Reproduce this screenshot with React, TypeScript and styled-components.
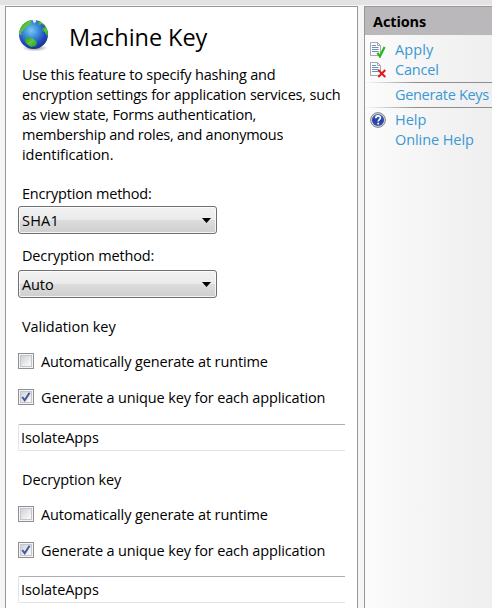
import React from 'react';
import styled, { createGlobalStyle } from 'styled-components';

const GlobalStyle = createGlobalStyle`
  * { box-sizing: border-box; }
  html, body { margin: 0; padding: 0; overflow: hidden; }
  body {
    width: 492px;
    height: 608px;
    background: #f6f6f6;
    color: #000;
    font-family: 'Open Sans', 'Noto Sans', sans-serif;
    font-size: 14.5px;
    line-height: 20px;
    white-space: nowrap;
  }
`;

const Window = styled.div`
  display: flex;
  flex-direction: column;
  width: 492px;
  height: 608px;
  overflow: hidden;
`;

const TopStrip = styled.div`
  flex: 0 0 5px;
  margin-bottom: 1px;
  background: #e5e2e4;
`;

const Panels = styled.div`
  flex: 1;
  display: flex;
  gap: 6px;
  padding-left: 5px;
  min-height: 0;
`;

const Feature = styled.main`
  flex: 0 0 353px;
  display: flex;
  flex-direction: column;
  overflow: hidden;
  padding: 11px 12px 0;
  border: 1px solid #979797;
  border-bottom: 0;
  background: #fff;
`;

const TitleRow = styled.header`
  display: flex;
  align-items: flex-start;
  flex: 0 0 47px;
  gap: 19px;
`;

const Title = styled.h1`
  margin: 3px 0 0;
  font-size: 23.5px;
  line-height: 32px;
  font-weight: 400;
  letter-spacing: -0.05px;
`;

const Text = styled.span<{ $spacing?: number }>`
  display: block;
  letter-spacing: ${(p) => p.$spacing ?? -0.25}px;
`;

const Description = styled.div`
  margin: 0 0 19px 4px;
`;

const Field = styled.div<{ $gap: number }>`
  display: flex;
  flex-direction: column;
  gap: ${(p) => p.$gap}px;
  margin-bottom: 12px;
`;

const Label = styled.div`
  padding-left: 4px;
`;

const Select = styled.div`
  display: flex;
  align-items: center;
  justify-content: space-between;
  width: 199px;
  height: 28px;
  padding: 1px 5px 0 3px;
  border: 1px solid #707070;
  border-radius: 3px;
  background: linear-gradient(#f2f2f2, #ebebeb 49%, #dddddd 50%, #cfcfcf);
  box-shadow: inset 0 0 0 1px rgba(255, 255, 255, 0.75);
`;

const KeySection = styled.section<{ $top: number }>`
  display: flex;
  flex-direction: column;
  margin-top: ${(p) => p.$top}px;
`;

const Checks = styled.div`
  display: flex;
  flex-direction: column;
  gap: 16px;
  margin-top: 14px;
`;

const CheckRow = styled.div`
  display: flex;
  align-items: center;
  gap: 7px;
  height: 20px;
`;

const CheckLabel = styled(Text)`
  padding-top: 2px;
`;

const Box = styled.span`
  display: grid;
  place-items: center;
  width: 16px;
  height: 16px;
  border: 1px solid #8e8f8f;
  background: #f4f4f4;
`;

const BoxInner = styled.span`
  display: grid;
  place-items: center;
  width: 12px;
  height: 12px;
  border: 1px solid #c3c7cd;
  background: linear-gradient(135deg, #cfd2d7, #f6f6f6 85%);
`;

const Input = styled.div<{ $top: number }>`
  height: 27px;
  width: 327px;
  margin-top: ${(p) => p.$top}px;
  padding: 3px 0 0 2px;
  border: 1px solid #e2e3ea;
  border-top-color: #abadb3;
  border-right: 0;
  border-radius: 2px 0 0 2px;
`;

const Actions = styled.aside`
  flex: 1;
  display: flex;
  flex-direction: column;
  min-width: 0;
  border: solid #979797;
  border-width: 1px 0 0 1px;
  background: linear-gradient(90deg, #fcfcfc, #f3f3f3 60%, #efefef);
`;

const ActionsHeader = styled.div`
  flex: 0 0 28px;
  padding: 5px 0 0 8px;
  margin-bottom: 5px;
  background: #bab8ba;
  font-weight: 700;
`;

const Action = styled.div`
  display: flex;
  align-items: center;
  gap: 9px;
  height: 20px;
  padding-left: 5px;
  color: #3b98d4;
`;

const IconSlot = styled.span`
  display: flex;
  flex: 0 0 16px;
  height: 16px;
`;

const Divider = styled.div`
  flex: 0 0 1px;
  margin: 2px 0;
  background: linear-gradient(90deg, #f4f4f4 3%, #8e8e8e 40%, #8e8e8e);
`;

function Globe() {
  return (
    <svg width="32" height="34" viewBox="0 0 32 34">
      <defs>
        <radialGradient id="sea" cx=".42" cy=".36" r=".66">
          <stop offset="0" stopColor="#7cc8f2" />
          <stop offset=".4" stopColor="#3a8cdc" />
          <stop offset=".75" stopColor="#2348b8" />
          <stop offset="1" stopColor="#1b3390" />
        </radialGradient>
        <radialGradient id="ground">
          <stop offset="0" stopColor="#000" stopOpacity=".45" />
          <stop offset="1" stopColor="#000" stopOpacity="0" />
        </radialGradient>
        <linearGradient id="land" x2="1" y2="1">
          <stop offset="0" stopColor="#259c1c" />
          <stop offset=".5" stopColor="#5fc63e" />
          <stop offset="1" stopColor="#159a38" />
        </linearGradient>
        <clipPath id="disc"><circle cx="15.5" cy="16.5" r="14.5" /></clipPath>
      </defs>
      <ellipse cx="17" cy="30" rx="13" ry="3.5" fill="url(#ground)" />
      <circle cx="15.5" cy="16.5" r="14.5" fill="url(#sea)" />
      <g clipPath="url(#disc)" fill="url(#land)">
        <path d="M1 15 3 7 9 2l5-1-1 3 1 1-3 2-2 2-3 2-1 2-2 1 1 2-2 1z" />
        <path d="m20 3 4-1 4 5-2 1-2-2-3 1z" />
        <path d="m25 10 3-2 3 6-1 4-2-1-1-3-3-2z" />
        <path d="m7 21 3-2 4 1 5 4-1 4-5 1-4-3-2-3z" />
        <path d="m14 1 4 0 0 3-2 1z" fill="#e8faff" />
      </g>
    </svg>
  );
}

function DocIcon({ kind }: { kind: 'apply' | 'cancel' }) {
  return (
    <svg width="16" height="16" viewBox="0 0 16 16" fill="none">
      <path d="M.5.5h7l3 3v10H.5z" fill="#fbfbfb" stroke="#a5a8ad" />
      <path d="M7.5.5v3h3" stroke="#a5a8ad" />
      <path d="M2 3.5h4M2 5.5h6.5M2 7.5h6.5M2 9.5h6.5" stroke="#6b8fbd" />
      {kind === 'apply' ? (
        <path d="m7.4 10.8 2.5 3.6L14.6 5" stroke="#27b718" strokeWidth="2.2" />
      ) : (
        <path d="m8.3 8 7 7m0-7-7 7" stroke="#e01b20" strokeWidth="2" />
      )}
    </svg>
  );
}

function HelpIcon() {
  return (
    <svg width="16" height="16" viewBox="0 0 16 16">
      <defs>
        <linearGradient id="help" x2="0" y2="1">
          <stop offset="0" stopColor="#5570c8" />
          <stop offset=".5" stopColor="#243da0" />
          <stop offset="1" stopColor="#3555bd" />
        </linearGradient>
      </defs>
      <circle cx="8" cy="8" r="7.4" fill="#d4d4d4" stroke="#85878d" />
      <circle cx="8" cy="8" r="6" fill="url(#help)" />
      <path d="M5.8 6.2c0-3 4.6-3 4.6-.3 0 1.7-2.2 1.7-2.2 3.6" fill="none" stroke="#fff" strokeWidth="1.6" />
      <path d="M7.3 10.7h1.8v1.7H7.3z" fill="#fff" />
    </svg>
  );
}

function DropDown({ value, spacing }: { value: string; spacing?: number }) {
  return (
    <Select>
      <Text $spacing={spacing}>{value}</Text>
      <svg width="9" height="5" viewBox="0 0 9 5"><path d="M0 0h9L4.5 5z" fill="#000" /></svg>
    </Select>
  );
}

function Check({ label, checked, spacing }: { label: string; checked?: boolean; spacing?: number }) {
  return (
    <CheckRow>
      <Box>
        <BoxInner>
          {checked && (
            <svg width="10" height="10" viewBox="0 0 10 10">
              <path d="m1.2 5 2.5 3.2L8.6.8" fill="none" stroke="#465a9c" strokeWidth="2" />
            </svg>
          )}
        </BoxInner>
      </Box>
      <CheckLabel $spacing={spacing}>{label}</CheckLabel>
    </CheckRow>
  );
}

type KeySettingsProps = { title: string; top: number; inputTop: number; spacing: number };

function KeySettings({ title, top, inputTop, spacing }: KeySettingsProps) {
  return (
    <KeySection $top={top}>
      <Label><Text $spacing={spacing}>{title}</Text></Label>
      <Checks>
        <Check label="Automatically generate at runtime" spacing={-0.12} />
        <Check label="Generate a unique key for each application" spacing={-0.14} checked />
      </Checks>
      <Input $top={inputTop}><Text $spacing={-0.07}>IsolateApps</Text></Input>
    </KeySection>
  );
}

export default function App() {
  return (
    <>
      <GlobalStyle />
      <Window>
        <TopStrip />
        <Panels>
          <Feature>
            <TitleRow>
              <Globe />
              <Title>Machine Key</Title>
            </TitleRow>
            <Description>
              <Text $spacing={-0.21}>Use this feature to specify hashing and</Text>
              <Text $spacing={-0.18}>encryption settings for application services, such</Text>
              <Text $spacing={-0.22}>as view state, Forms authentication,</Text>
              <Text $spacing={-0.25}>membership and roles, and anonymous</Text>
              <Text $spacing={-0.05}>identification.</Text>
            </Description>
            <Field $gap={2}>
              <Label><Text $spacing={-0.2}>Encryption method:</Text></Label>
              <DropDown value="SHA1" spacing={0.2} />
            </Field>
            <Field $gap={4}>
              <Label><Text $spacing={-0.15}>Decryption method:</Text></Label>
              <DropDown value="Auto" spacing={-0.1} />
            </Field>
            <KeySettings title="Validation key" top={7} inputTop={17} spacing={-0.04} />
            <KeySettings title="Decryption key" top={19} inputTop={16} spacing={-0.12} />
          </Feature>
          <Actions>
            <ActionsHeader><Text $spacing={-0.12}>Actions</Text></ActionsHeader>
            <Action><IconSlot><DocIcon kind="apply" /></IconSlot><Text $spacing={0.1}>Apply</Text></Action>
            <Action><IconSlot><DocIcon kind="cancel" /></IconSlot><Text $spacing={-0.2}>Cancel</Text></Action>
            <Divider />
            <Action><IconSlot /><Text $spacing={-0.32}>Generate Keys</Text></Action>
            <Divider />
            <Action><IconSlot><HelpIcon /></IconSlot><Text $spacing={0}>Help</Text></Action>
            <Action><IconSlot /><Text $spacing={-0.08}>Online Help</Text></Action>
          </Actions>
        </Panels>
      </Window>
    </>
  );
}
